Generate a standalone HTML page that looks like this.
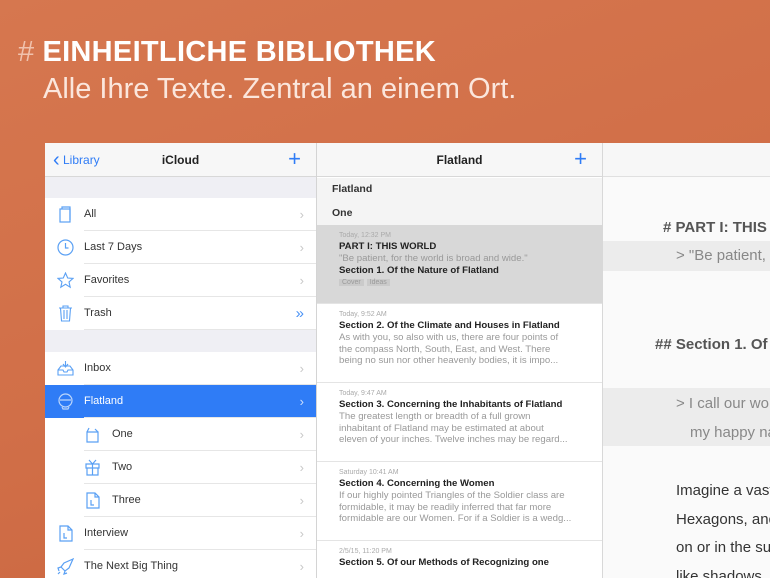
<!DOCTYPE html>
<html><head><meta charset="utf-8"><style>
*{margin:0;padding:0;box-sizing:border-box}
html,body{width:770px;height:578px;overflow:hidden}
body{position:relative;font-family:"Liberation Sans",sans-serif;background:linear-gradient(160deg,#d6774f 0%,#d16f48 50%,#c9643e 100%)}
.a{position:absolute}
.t1{left:18px;top:36px;color:#fff;font-size:29px;font-weight:bold;letter-spacing:0.3px;white-space:nowrap}
.t1 span{color:#f0c2ad;font-weight:normal;margin-right:8px}
.t2{left:43px;top:73px;color:#fbe6dc;font-size:29px;white-space:nowrap;letter-spacing:0px}
.pan{top:143px;height:435px;overflow:hidden}
.nav{height:34px;background:#f7f7f7;border-bottom:1px solid #d8d8d8;position:relative;font-size:12px;font-weight:bold;color:#222;text-align:center;line-height:34px}
.plus{position:absolute;color:#2f7cf6;font-size:22px;font-weight:normal;top:0;line-height:32px}
.row{position:absolute;left:0;right:0;height:33px;background:#fff;font-size:11px;color:#333;line-height:33px}
.row .lb{position:absolute;left:39px}
.row .ch{position:absolute;right:12px;color:#c8c8c8;font-size:13px}
.row:after{content:"";position:absolute;left:39px;right:0;bottom:0;border-bottom:1px solid #e6e6e6}
.ic{position:absolute;left:12px;top:8px;width:17px;height:17px}
.it{position:absolute;left:0;right:0;height:79px;border-bottom:1px solid #e4e4e4;padding:6px 0 0 22px;font-size:9.6px;line-height:11.8px;color:#999;white-space:nowrap;overflow:hidden}
.it b{color:#222;display:block;font-size:9.6px}
.it .d{font-size:7px;color:#aaa;line-height:10px}
</style></head><body>
<div class="a t1"><span>#</span>EINHEITLICHE BIBLIOTHEK</div>
<div class="a t2">Alle Ihre Texte. Zentral an einem Ort.</div>

<div class="a pan" style="left:45px;width:272px;background:#efeff4;border-right:1px solid #d4d4d4">
 <div class="nav"><span style="position:absolute;left:8px;top:0;color:#2f7cf6;font-weight:normal;font-size:12px"><span style="font-size:20px;vertical-align:-2px">‹</span> Library</span>iCloud<span class="plus" style="right:15px">+</span></div>
 <div class="row" style="top:55px"><svg class="ic" viewBox="0 0 17 17" fill="none" stroke="#5aa0f4" stroke-width="1.2"><rect x="3" y="3" width="10" height="13"/><path d="M5 3V1h8v13"/></svg><span class="lb">All</span><span class="ch">›</span></div>
 <div class="row" style="top:88px"><svg class="ic" viewBox="0 0 17 17" fill="none" stroke="#5aa0f4" stroke-width="1.2"><circle cx="8.5" cy="8.5" r="7.5"/><path d="M8.5 4v5h3"/></svg><span class="lb">Last 7 Days</span><span class="ch">›</span></div>
 <div class="row" style="top:121px"><svg class="ic" viewBox="0 0 17 17" fill="none" stroke="#5aa0f4" stroke-width="1.1"><path d="M8.5 1l2.2 5 5.3.4-4 3.5 1.2 5.3-4.7-2.9-4.7 2.9 1.2-5.3-4-3.5 5.3-.4z"/></svg><span class="lb">Favorites</span><span class="ch">›</span></div>
 <div class="row" style="top:154px"><svg class="ic" viewBox="0 0 17 17" fill="none" stroke="#5aa0f4" stroke-width="1.1"><path d="M2 3h13M6 3V1h5v2M3.5 3l1 13h8l1-13M7 5v9M10 5v9"/></svg><span class="lb">Trash</span><span class="ch" style="color:#4a92f5;font-size:15px">»</span></div>
 <div class="row" style="top:209px"><svg class="ic" viewBox="0 0 17 17" fill="none" stroke="#5aa0f4" stroke-width="1.1"><path d="M1 10l3-4h9l3 4v5H1zM1 10h5l1 2h3l1-2h5M8.5 1v6M6 4l2.5 3 2.5-3"/></svg><span class="lb">Inbox</span><span class="ch">›</span></div>
 <div class="row" style="top:242px;background:#2f7cf6;color:#fff"><svg class="ic" viewBox="0 0 17 17" fill="none" stroke="#bcd6fb" stroke-width="1.2"><circle cx="8.5" cy="7.5" r="6.5"/><path d="M3 7h11M5 14l1 2h5l1-2"/></svg><span class="lb">Flatland</span><span class="ch" style="color:#cfe0fc">›</span></div>
 <div class="row" style="top:275px"><svg class="ic" style="left:39px" viewBox="0 0 17 17" fill="none" stroke="#5aa0f4" stroke-width="1.2"><path d="M3 6h11v10H3zM3 6l2-4M14 6l-3-3"/></svg><span class="lb" style="left:67px">One</span><span class="ch">›</span></div>
 <div class="row" style="top:308px"><svg class="ic" style="left:39px" viewBox="0 0 17 17" fill="none" stroke="#5aa0f4" stroke-width="1.2"><path d="M2 5h13v4H2zM3 9h11v7H3zM8.5 5v11M8.5 5L5 1M8.5 5l3.5-4"/></svg><span class="lb" style="left:67px">Two</span><span class="ch">›</span></div>
 <div class="row" style="top:341px"><svg class="ic" style="left:39px" viewBox="0 0 17 17" fill="none" stroke="#5aa0f4" stroke-width="1.2"><path d="M3 1h8l4 4v11H3zM11 1v4h4M7 8v5h3"/></svg><span class="lb" style="left:67px">Three</span><span class="ch">›</span></div>
 <div class="row" style="top:374px"><svg class="ic" viewBox="0 0 17 17" fill="none" stroke="#5aa0f4" stroke-width="1.2"><path d="M3 1h8l4 4v11H3zM11 1v4h4M7 8v5h3"/></svg><span class="lb">Interview</span><span class="ch">›</span></div>
 <div class="row" style="top:407px"><svg class="ic" viewBox="0 0 17 17" fill="none" stroke="#5aa0f4" stroke-width="1.2"><path d="M16 1L7 5 4 9l4 4 4-3zM4 9l-3 1 1 3M8 13l-1 3 3-1M3 14l-2 2"/></svg><span class="lb">The Next Big Thing</span><span class="ch">›</span></div>
</div>

<div class="a pan" style="left:317px;width:286px;background:#fff;border-right:1px solid #d8d8d8">
 <div class="nav">Flatland<span class="plus" style="right:15px">+</span></div>
 <div class="a" style="left:0;right:0;top:35px;height:47px;background:#f4f4f4;font-size:10.5px;font-weight:bold;color:#333"><div style="position:absolute;left:15px;top:5px">Flatland</div><div style="position:absolute;left:15px;top:29px">One</div></div>
 <div class="it" style="top:82px;background:#d8d8d8"><div class="d">Today, 12:32 PM</div><b>PART I: THIS WORLD</b>"Be patient, for the world is broad and wide."<b>Section 1. Of the Nature of Flatland</b><span style="font-size:7px;background:#cacaca;padding:0 3px;margin-right:3px">Cover</span><span style="font-size:7px;background:#cacaca;padding:0 3px">Ideas</span></div>
 <div class="it" style="top:161px"><div class="d">Today, 9:52 AM</div><b>Section 2. Of the Climate and Houses in Flatland</b>As with you, so also with us, there are four points of<br>the compass North, South, East, and West. There<br>being no sun nor other heavenly bodies, it is impo...</div>
 <div class="it" style="top:240px"><div class="d">Today, 9:47 AM</div><b>Section 3. Concerning the Inhabitants of Flatland</b>The greatest length or breadth of a full grown<br>inhabitant of Flatland may be estimated at about<br>eleven of your inches. Twelve inches may be regard...</div>
 <div class="it" style="top:319px"><div class="d">Saturday 10:41 AM</div><b>Section 4. Concerning the Women</b>If our highly pointed Triangles of the Soldier class are<br>formidable, it may be readily inferred that far more<br>formidable are our Women. For if a Soldier is a wedg...</div>
 <div class="it" style="top:398px;border:none"><div class="d">2/5/15, 11:20 PM</div><b>Section 5. Of our Methods of Recognizing one</b></div>
</div>

<div class="a pan" style="left:603px;width:167px;background:#fafafa;white-space:nowrap;color:#555;font-size:15px">
 <div class="nav" style="border-bottom:1px solid #e0e0e0"></div>
 <div class="a" style="left:60px;top:76px;font-weight:bold;color:#555">#&nbsp;PART I: THIS WORLD</div>
 <div class="a" style="left:0;right:0;top:98px;height:30px;background:#ececec"></div>
 <div class="a" style="left:73px;top:104px;color:#888">&gt; "Be patient, for</div>
 <div class="a" style="left:52px;top:193px;font-weight:bold;color:#555">## Section 1. Of the</div>
 <div class="a" style="left:0;right:0;top:245px;height:58px;background:#ececec"></div>
 <div class="a" style="left:73px;top:252px;color:#888">&gt; I call our world</div>
 <div class="a" style="left:87px;top:281px;color:#888">my happy nature</div>
 <div class="a" style="left:73px;top:334px;color:#333;line-height:28.5px">Imagine a vast sheet<br>Hexagons, and other<br>on or in the surface<br>like shadows</div>
</div>
</body></html>
